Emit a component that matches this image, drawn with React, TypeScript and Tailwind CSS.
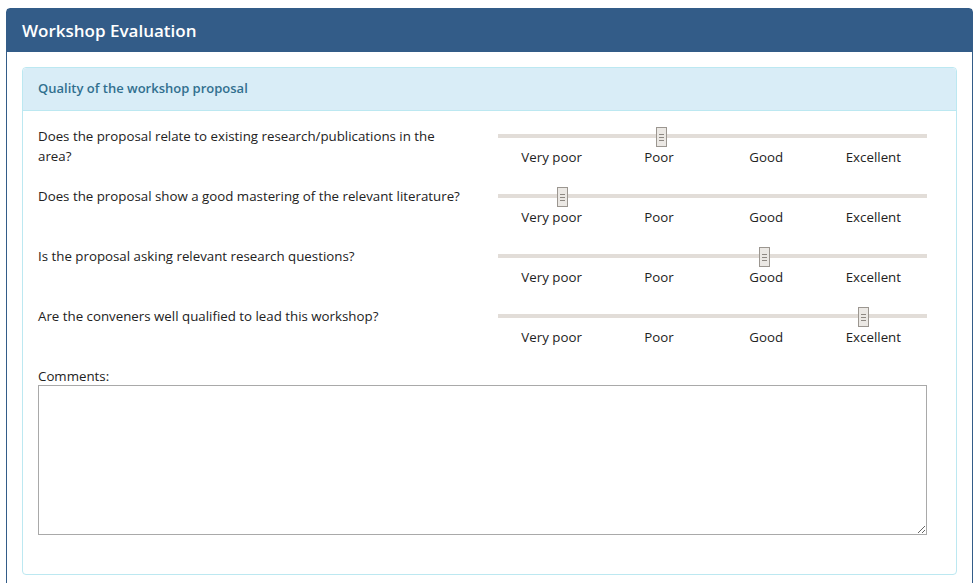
import React from "react";

const labels = ["Very poor", "Poor", "Good", "Excellent"];

const questions = [
    { text: "Does the proposal relate to existing research/publications in the area?", value: 38 },
    { text: "Does the proposal show a good mastering of the relevant literature?", value: 15 },
    { text: "Is the proposal asking relevant research questions?", value: 62 },
    { text: "Are the conveners well qualified to lead this workshop?", value: 85 },
];

const RatingSlider = ({ value }: { value: number }) => {
    return (
        <div className="w-[429px] shrink-0">
            <div className="relative h-[20px]">
                <div className="absolute left-0 right-0 top-[8px] h-[4px] bg-[#e2ddd8]" />
                {/* thumb */}
                <div
                    className="absolute top-[1px] -ml-[5px] w-[11px] h-[20px] bg-[#ebe8e4] border border-[#9b9690] flex flex-col items-center justify-center gap-[2px]"
                    style={{ left: `${value}%` }}
                >
                    <span className="block w-[5px] h-px bg-[#8d8882]" />
                    <span className="block w-[5px] h-px bg-[#8d8882]" />
                    <span className="block w-[5px] h-px bg-[#8d8882]" />
                </div>
            </div>
            <div className="grid grid-cols-4 mt-[1px] leading-[20px]">
                {labels.map((l) => (
                    <div key={l} className="text-center">{l}</div>
                ))}
            </div>
        </div>
    );
};

export default function App() {
    return (
        <div
            className="min-h-screen bg-white pt-2 px-[6px] text-[13.3px] text-[#222]"
            style={{ fontFamily: '"Open Sans", "Noto Sans", sans-serif' }}
        >
            <div className="border border-[#335c88] rounded-t-[4px] min-h-[600px]">
                {/* Header */}
                <div className="h-[43px] bg-[#335c88] flex items-center pl-[15px]">
                    <h1 className="text-white text-[17px] font-semibold">Workshop Evaluation</h1>
                </div>

                <div className="p-[15px]">
                    <div className="border border-[#bce8f1] rounded-[4px]">
                        <div className="h-[43px] bg-[#d9edf7] border-b border-[#bce8f1] flex items-center pl-[15px] text-[#31708f] text-[13px] font-semibold rounded-t-[4px]">
                            Quality of the workshop proposal
                        </div>

                        <div className="pt-[15px] pl-[15px] pr-[29px] pb-[39px]">
                            {questions.map((q, i) => (
                                <div key={i} className="flex justify-between h-[60px]">
                                    <div className="w-[430px] leading-[20px]">{q.text}</div>
                                    <RatingSlider value={q.value} />
                                </div>
                            ))}

                            <div className="leading-[20px]">Comments:</div>
                            <textarea className="block w-full -mt-px h-[150px] border border-[#a9a9a9] outline-none resize" />
                        </div>
                    </div>
                </div>
            </div>
        </div>
    );
}
